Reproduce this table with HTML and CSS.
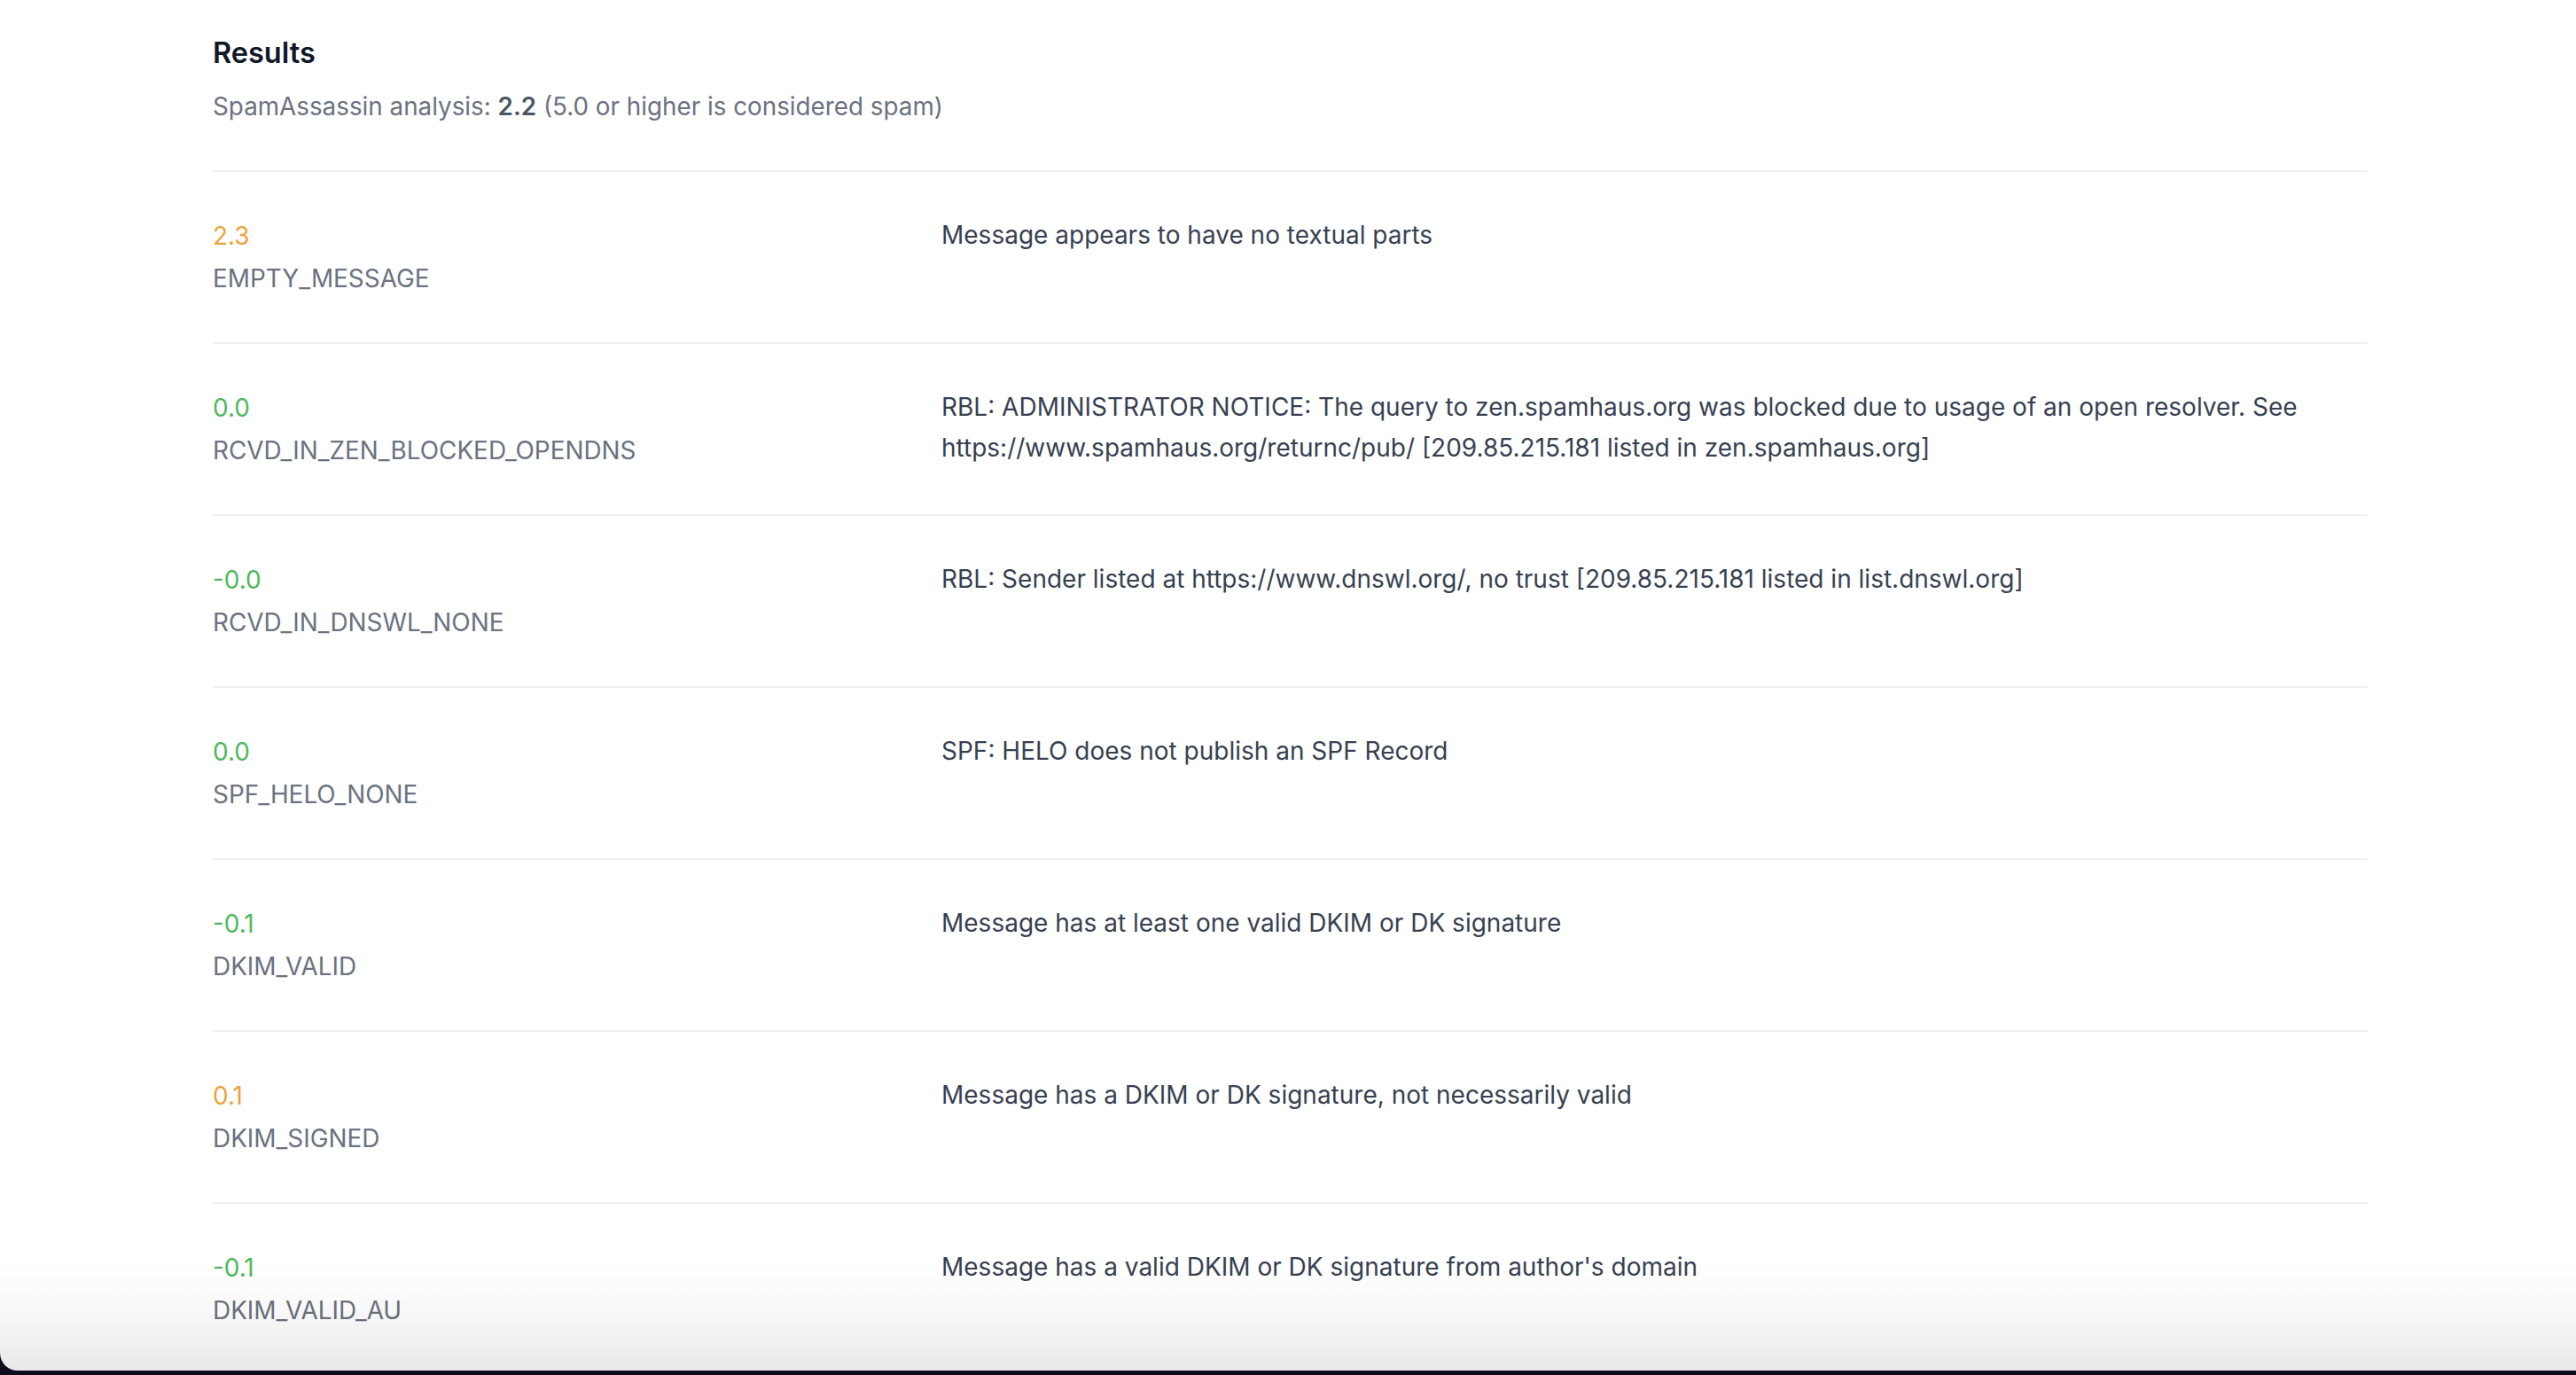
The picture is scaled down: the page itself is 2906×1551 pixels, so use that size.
FILE: index.html
```html
<!DOCTYPE html>
<html lang="en">
<head>
<meta charset="utf-8">
<title>Results</title>
<link rel="stylesheet" href="styles.css">
</head>
<body>
<div class="window">
  <main class="content">
    <h2 class="title">Results</h2>
    <p class="summary">SpamAssassin analysis: <strong>2.2</strong> (5.0 or higher is considered spam)</p>
    <ul class="rules">
      <li class="rule">
        <div class="score"><span class="value warn">2.3</span><span class="name">EMPTY_MESSAGE</span></div>
        <p class="desc">Message appears to have no textual parts</p>
      </li>
      <li class="rule">
        <div class="score"><span class="value ok">0.0</span><span class="name">RCVD_IN_ZEN_BLOCKED_OPENDNS</span></div>
        <p class="desc">RBL: ADMINISTRATOR NOTICE: The query to zen.spamhaus.org was blocked due to usage of an open resolver. See https://www.spamhaus.org/returnc/pub/ [209.85.215.181 listed in zen.spamhaus.org]</p>
      </li>
      <li class="rule">
        <div class="score"><span class="value ok">-0.0</span><span class="name">RCVD_IN_DNSWL_NONE</span></div>
        <p class="desc">RBL: Sender listed at https://www.dnswl.org/, no trust [209.85.215.181 listed in list.dnswl.org]</p>
      </li>
      <li class="rule">
        <div class="score"><span class="value ok">0.0</span><span class="name">SPF_HELO_NONE</span></div>
        <p class="desc">SPF: HELO does not publish an SPF Record</p>
      </li>
      <li class="rule">
        <div class="score"><span class="value ok">-0.1</span><span class="name">DKIM_VALID</span></div>
        <p class="desc">Message has at least one valid DKIM or DK signature</p>
      </li>
      <li class="rule">
        <div class="score"><span class="value warn">0.1</span><span class="name">DKIM_SIGNED</span></div>
        <p class="desc">Message has a DKIM or DK signature, not necessarily valid</p>
      </li>
      <li class="rule">
        <div class="score"><span class="value ok">-0.1</span><span class="name">DKIM_VALID_AU</span></div>
        <p class="desc">Message has a valid DKIM or DK signature from author's domain</p>
      </li>
    </ul>
  </main>
  <div class="fade"></div>
</div>
</body>
</html>
```

FILE: styles.css
```css
html, body {
  margin: 0;
  padding: 0;
  height: 100%;
}

body {
  background: #0e0b1c;
  overflow: hidden;
  font-family: Inter, "Noto Sans", "Liberation Sans", sans-serif;
}

.window {
  position: relative;
  height: calc(100vh - 5px);
  background: #ffffff;
  border-bottom-left-radius: 20px;
  overflow: hidden;
}

.content {
  width: 2431px;
  padding: 36px 0 0 240px;
}

.title {
  margin: 0;
  font-size: 32.5px;
  line-height: 48px;
  font-weight: 600;
  color: #111827;
}

.summary {
  margin: 17px 0 0;
  font-size: 27.8px;
  line-height: 38px;
  color: #6b7280;
}

.summary strong {
  font-weight: 600;
  color: #4b5563;
}

.rules {
  list-style: none;
  margin: 53px 0 0;
  padding: 0;
  border-top: 2px solid #f1f1f2;
}

.rule {
  display: grid;
  grid-template-columns: 792px 1fr;
  column-gap: 30px;
  padding: 48px 0;
  border-bottom: 2px solid #f1f1f2;
}

.score {
  display: flex;
  flex-direction: column;
}

.value,
.name {
  font-size: 27.9px;
  line-height: 48px;
}

.value.warn { color: #eea23c; }
.value.ok { color: #4cb95c; }

.name {
  color: #6b7280;
}

.desc {
  margin: 0;
  font-size: 28px;
  line-height: 46px;
  color: #374151;
}

.fade {
  position: absolute;
  left: 0;
  right: 0;
  bottom: 0;
  height: 130px;
  background: linear-gradient(to bottom, rgba(0, 0, 0, 0) 0%, rgba(0, 0, 0, 0.025) 45%, rgba(0, 0, 0, 0.09) 100%);
  pointer-events: none;
}
```
